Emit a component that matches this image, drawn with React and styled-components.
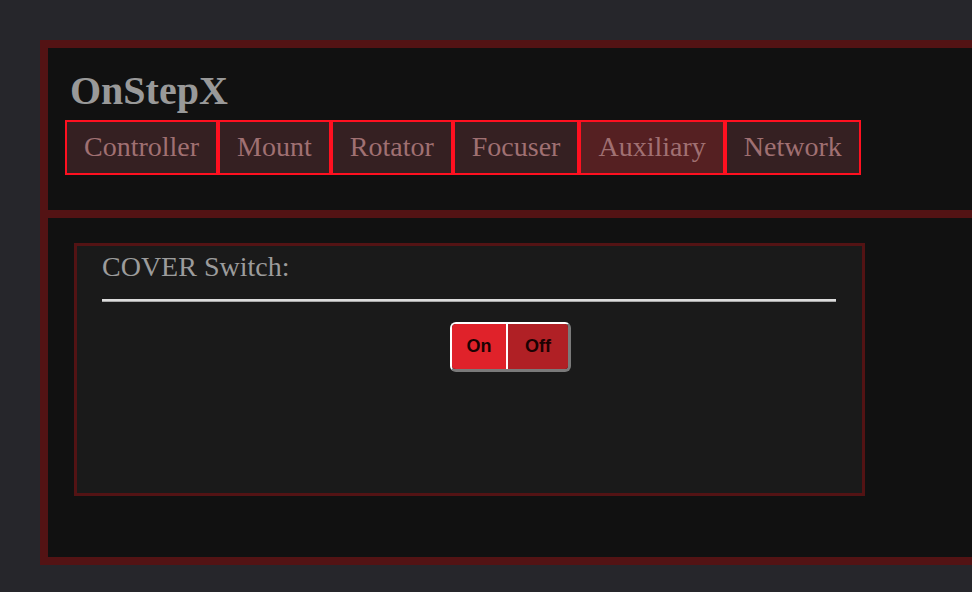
import React, { useState } from "react";
import styled, { createGlobalStyle } from "styled-components";

const GlobalStyle = createGlobalStyle`
  html, body {
    margin: 0;
    padding: 0;
    overflow: hidden;
    background: #26262b;
  }
  body {
    font-family: "Liberation Serif", "Times New Roman", serif;
  }
`;

const Page = styled.div`
  padding: 40px 0 0 40px;
`;

const Frame = styled.div`
  border: 8px solid #531314;
  border-right: none;
  background: #111111;
`;

const Header = styled.header`
  padding: 0 0 35px 17px;
  border-bottom: 8px solid #531314;
`;

const Title = styled.h1`
  margin: 20px 0 6px 5px;
  font-size: 40px;
  line-height: 46px;
  font-weight: bold;
  color: #999999;
`;

const Tabs = styled.nav`
  display: flex;
`;

const Tab = styled.button`
  border: 2px solid #ff1020;
  background: ${(props) => (props.active ? "#552022" : "#352022")};
  color: #a07072;
  font-family: "Liberation Serif", "Times New Roman", serif;
  font-size: 28px;
  line-height: 32px;
  padding: 9px 17px 10px;
  margin: 0;
  cursor: pointer;
`;

const Content = styled.main`
  padding: 25px 0 61px 26px;
`;

const Panel = styled.section`
  width: 791px;
  height: 253px;
  box-sizing: border-box;
  border: 3px solid #531314;
  background: #1a1a1a;
  padding: 5px 26px 0 25px;
`;

const Label = styled.div`
  font-size: 28px;
  line-height: 32px;
  color: #9c9c9c;
`;

const Rule = styled.hr`
  margin: 16px 0 0;
  height: 0;
  border: none;
  border-top: 2px solid #dcdcdc;
  border-bottom: 1px solid #a8a8a8;
`;

const ToggleRow = styled.div`
  display: flex;
  padding: 20px 0 0 348px;
`;

const Toggle = styled.div`
  display: flex;
  height: 50px;
  box-sizing: border-box;
  border: 2px solid #ffffff;
  border-right: 3px solid #7a7a7a;
  border-bottom: 3px solid #7a7a7a;
  border-radius: 6px;
  overflow: hidden;
`;

const Segment = styled.button`
  display: flex;
  align-items: center;
  justify-content: center;
  border: none;
  margin: 0;
  width: ${(props) => props.width}px;
  background: ${(props) => (props.on ? "#e0222a" : "#b02025")};
  border-right: ${(props) => (props.divider ? "2px solid #ffffff" : "none")};
  color: #1a0202;
  font-family: "Liberation Sans", Arial, sans-serif;
  font-weight: bold;
  font-size: 18px;
  cursor: pointer;
`;

const tabs = ["Controller", "Mount", "Rotator", "Focuser", "Auxiliary", "Network"];

export default function App() {
  const [active, setActive] = useState("Auxiliary");
  return (
    <>
      <GlobalStyle />
      <Page>
        <Frame>
          <Header>
            <Title>OnStepX</Title>
            <Tabs>
              {tabs.map((t) => (
                <Tab key={t} active={t === active} onClick={() => setActive(t)}>
                  {t}
                </Tab>
              ))}
            </Tabs>
          </Header>
          <Content>
            <Panel>
              <Label>COVER Switch:</Label>
              <Rule />
              <ToggleRow>
                <Toggle>
                  <Segment on width={56} divider>
                    On
                  </Segment>
                  <Segment width={60}>Off</Segment>
                </Toggle>
              </ToggleRow>
            </Panel>
          </Content>
        </Frame>
      </Page>
    </>
  );
}
